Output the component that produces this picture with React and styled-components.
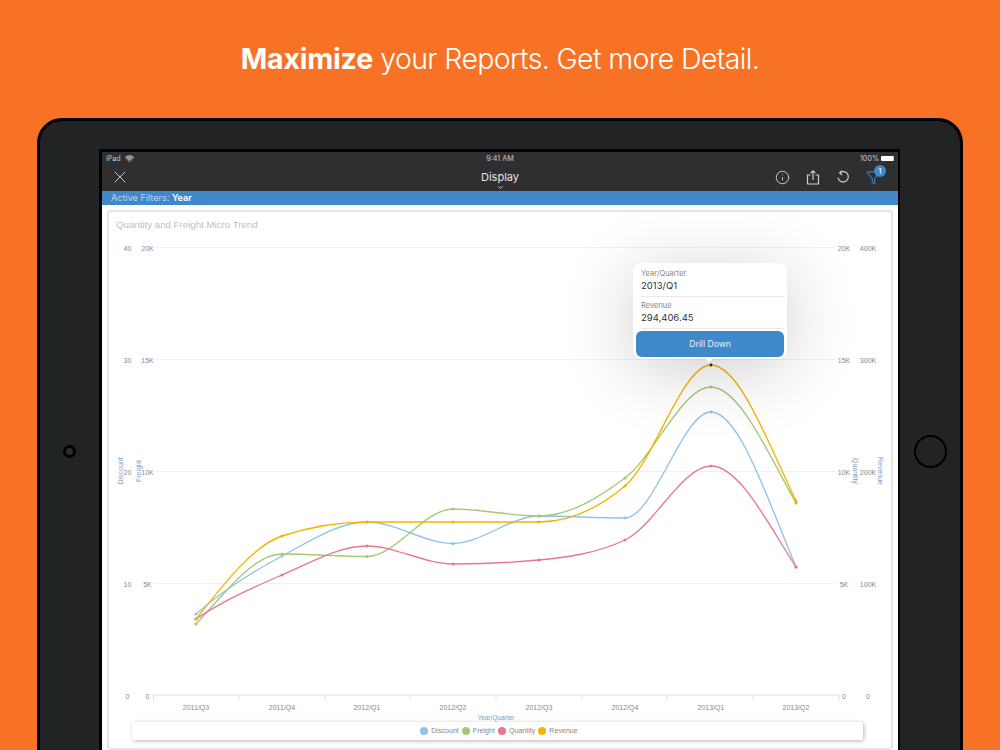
import React from 'react';
import styled, { createGlobalStyle } from 'styled-components';
import { X, Info, Filter, Wifi, ChevronDown } from 'lucide-react';

const GlobalStyle = createGlobalStyle`
  html, body {
    margin: 0;
    padding: 0;
    background: #f77225;
  }
`;

const Page = styled.div`
  width: 1000px;
  height: 750px;
  overflow: hidden;
  background: #f77225;
  font-family: "Liberation Sans", Arial, sans-serif;
`;

const Headline = styled.h1`
  margin: 0;
  height: 118px;
  display: flex;
  align-items: center;
  justify-content: center;
  padding-bottom: 1px;
  box-sizing: border-box;
  color: #fff;
  font-family: Inter, sans-serif;
  font-size: 28.5px;
  font-weight: 300;
  letter-spacing: -0.64px;

  strong {
    font-weight: 700;
    letter-spacing: -0.2px;
  }
`;

const Device = styled.div`
  display: flex;
  box-sizing: border-box;
  width: 926px;
  height: 666px;
  margin-left: 37px;
  border: 3px solid #000;
  border-radius: 25px;
  background: #222324;
`;

const Bezel = styled.div`
  flex: ${(p) => (p.$width ? `0 0 ${p.$width}px` : 1)};
  display: flex;
  align-items: center;
  justify-content: center;
`;

const Camera = styled.div`
  box-sizing: border-box;
  width: 13px;
  height: 13px;
  border: 3px solid #000;
  border-radius: 50%;
  background: #2d2d2f;
`;

const HomeButton = styled.div`
  box-sizing: border-box;
  width: 33px;
  height: 33px;
  border: 2px solid #000;
  border-radius: 50%;
`;

const Screen = styled.div`
  box-sizing: border-box;
  width: 801px;
  height: 604px;
  margin-top: 28px;
  border: 3px solid #000;
  border-right-width: 2px;
  border-bottom: 0;
  background: #fff;
`;

const StatusBar = styled.div`
  display: grid;
  grid-template-columns: 1fr auto 1fr;
  align-items: center;
  height: 13px;
  padding: 0 4px;
  background: #2f2f31;
  color: #c9c9ca;
  font-family: Inter, sans-serif;
  font-size: 7.2px;
`;

const StatusLeft = styled.div`
  display: flex;
  align-items: center;
  gap: 4px;
`;

const StatusRight = styled.div`
  display: flex;
  align-items: center;
  justify-content: flex-end;
  gap: 2px;
`;

const Battery = styled.div`
  width: 12px;
  height: 5px;
  border-right: 1px solid #c9c9ca;
  background: #fff;
  border-radius: 1px;
`;

const NavBar = styled.div`
  position: relative;
  display: flex;
  align-items: center;
  justify-content: space-between;
  box-sizing: border-box;
  height: 26px;
  padding: 0 17px 2px 8px;
  background: #2f2f31;
`;

const NavTitle = styled.div`
  position: absolute;
  left: 0;
  right: 0;
  top: 5px;
  display: flex;
  flex-direction: column;
  align-items: center;
  color: #e4e4e4;
  font-family: Inter, sans-serif;
  font-size: 11px;
  line-height: 14px;
  pointer-events: none;

  svg {
    margin-top: 0;
  }
`;

const NavIcons = styled.div`
  display: flex;
  align-items: center;
  gap: 16px;
`;

const FilterButton = styled.div`
  position: relative;
  display: flex;
`;

const Badge = styled.span`
  position: absolute;
  top: -5px;
  right: -5px;
  width: 12px;
  height: 12px;
  border-radius: 50%;
  background: #3f88c9;
  color: #fff;
  font-family: Inter, sans-serif;
  font-size: 8px;
  line-height: 12px;
  text-align: center;
`;

const FilterBar = styled.div`
  height: 14px;
  padding-left: 9px;
  background: #3f88c9;
  color: #b9d5ee;
  font-family: Inter, sans-serif;
  font-size: 9.1px;
  line-height: 14px;

  b {
    color: #fff;
    font-weight: 600;
  }
`;

const Card = styled.div`
  position: relative;
  box-sizing: border-box;
  width: 786px;
  height: 540px;
  margin: 5px 0 0 5px;
  border: 2px solid #e5e5e5;
  border-radius: 4px;
  background: #fff;
`;

const CardTitle = styled.div`
  height: 20px;
  padding-left: 7px;
  color: #c0c0c0;
  font-size: 9.7px;
  line-height: 25px;
`;

const ChartSvg = styled.svg`
  display: block;
  width: 782px;
  height: 490px;
`;

const AxisText = styled.text`
  fill: #888;
  font-family: "Liberation Sans", Arial, sans-serif;
  font-size: 7px;
  text-anchor: middle;
  dominant-baseline: central;
`;

const AxisTitle = styled.text`
  fill: #7e9ec8;
  font-family: "Liberation Sans", Arial, sans-serif;
  font-size: ${(p) => p.$size || 7}px;
  text-anchor: middle;
  dominant-baseline: central;
`;

const Legend = styled.div`
  display: flex;
  align-items: center;
  justify-content: center;
  gap: 3px;
  height: 18px;
  margin: 0 28px 0 23px;
  padding-left: 3px;
  border-radius: 2px;
  background: #fff;
  box-shadow: 1px 1px 4px rgba(0, 0, 0, 0.3);
  color: #888;
  font-size: 7.1px;
`;

const LegendItem = styled.span`
  display: flex;
  align-items: center;
  gap: 3px;

  &::before {
    content: '';
    width: 8px;
    height: 8px;
    border-radius: 50%;
    background: ${(p) => p.$color};
  }
`;

const Tooltip = styled.div`
  position: absolute;
  left: 524px;
  top: 51px;
  box-sizing: border-box;
  width: 154px;
  height: 96px;
  padding: 6px 3px 2px;
  border-radius: 9px;
  background: #fff;
  box-shadow: 0 10px 70px rgba(0, 0, 0, 0.2);

  &::after {
    content: '';
    position: absolute;
    left: 73px;
    bottom: -3px;
    border: 3px solid transparent;
    border-bottom: 0;
    border-top-color: #fff;
  }
`;

const TipRow = styled.div`
  box-sizing: border-box;
  height: 28px;
  margin: 0 0 4px 5px;
  border-bottom: 1px solid #e9e9e9;

  & + & {
    margin-bottom: 2px;
  }
`;

const TipLabel = styled.div`
  color: #888;
  font-family: Inter, sans-serif;
  font-size: 7.5px;
  line-height: 10px;
`;

const TipValue = styled.div`
  color: #333;
  font-family: Inter, sans-serif;
  font-size: 9.5px;
  line-height: 14px;
`;

const DrillButton = styled.div`
  height: 26px;
  border-radius: 6px;
  background: #3f88c9;
  color: #e8f1f9;
  font-family: Inter, sans-serif;
  font-size: 8.6px;
  line-height: 26px;
  text-align: center;
`;

const XS = [196, 282, 367, 453, 539, 625, 711, 796];
const QUARTERS = ['2011/Q3', '2011/Q4', '2012/Q1', '2012/Q2', '2012/Q3', '2012/Q4', '2013/Q1', '2013/Q2'];
const TICKS = [153.5, 239, 325, 410, 496, 582, 667, 753, 839];

const SERIES = [
  { name: 'Discount', color: '#8fc4e8', ys: [614, 556, 522, 543.5, 516, 518, 412, 567] },
  { name: 'Freight', color: '#a5c878', ys: [624, 554, 556.5, 509, 516, 478, 387, 503] },
  { name: 'Quantity', color: '#e8788f', ys: [619, 575, 546, 564, 560, 540, 466, 567] },
  { name: 'Revenue', color: '#f5b300', ys: [619, 536, 522, 522, 522, 486, 365, 501] },
];

const GRID = [
  { y: 248, a: '40', b: '20K', c: '20K', d: '400K' },
  { y: 360, a: '30', b: '15K', c: '15K', d: '300K' },
  { y: 472, a: '20', b: '10K', c: '10K', d: '200K' },
  { y: 584, a: '10', b: '5K', c: '5K', d: '100K' },
  { y: 696, a: '0', b: '0', c: '0', d: '0' },
];

// monotone cubic through the points, same shape as the charting lib draws
function splinePath(xs, ys) {
  const n = xs.length;
  const slopes = [];
  for (let i = 0; i < n - 1; i++) slopes.push((ys[i + 1] - ys[i]) / (xs[i + 1] - xs[i]));
  const t = xs.map((_, i) => {
    if (i === 0) return slopes[0] * 1.3;
    if (i === n - 1) return slopes[n - 2] * 1.3;
    if (slopes[i - 1] * slopes[i] <= 0) return 0;
    const h0 = xs[i] - xs[i - 1];
    const h1 = xs[i + 1] - xs[i];
    const p = (slopes[i - 1] * h1 + slopes[i] * h0) / (h0 + h1);
    return Math.sign(p) * Math.min(Math.abs(p), 2 * Math.abs(slopes[i - 1]), 2 * Math.abs(slopes[i]));
  });
  let d = `M${xs[0]} ${ys[0]}`;
  for (let i = 0; i < n - 1; i++) {
    const h = (xs[i + 1] - xs[i]) / 3;
    d += `C${xs[i] + h} ${ys[i] + t[i] * h} ${xs[i + 1] - h} ${ys[i + 1] - t[i + 1] * h} ${xs[i + 1]} ${ys[i + 1]}`;
  }
  return d;
}

function ShareIcon() {
  return (
    <svg width="14" height="15" viewBox="0 0 14 15" fill="none" stroke="#cfcfcf" strokeWidth="1.2">
      <path d="M4.5 5H1.5V14H12.5V5H9.5" />
      <path d="M7 10V1M4.6 3.2L7 .8L9.4 3.2" />
    </svg>
  );
}

function UndoIcon() {
  return (
    <svg width="14" height="14" viewBox="0 0 14 14" fill="none" stroke="#cfcfcf" strokeWidth="1.2">
      <path d="M4 2.6A5.2 5.2 0 1 1 2 7.5" />
      <path d="M6.2 .6L3.6 2.7L6 5" />
    </svg>
  );
}

function Chart() {
  return (
    <ChartSvg viewBox="109 232 782 490">
      {GRID.slice(0, 4).map((g) => (
        <line key={g.y} x1="154" x2="835" y1={g.y - 0.5} y2={g.y - 0.5} stroke="#f1f1f1" />
      ))}
      {GRID.map((g) => (
        <g key={g.a}>
          <AxisText x="127.5" y={g.y + 0.8}>{g.a}</AxisText>
          <AxisText x="147.5" y={g.y + 0.8}>{g.b}</AxisText>
          <AxisText x="844" y={g.y + 0.8}>{g.c}</AxisText>
          <AxisText x="868" y={g.y + 0.8}>{g.d}</AxisText>
        </g>
      ))}
      <line x1="153" x2="840" y1="695" y2="695" stroke="#dde5f0" strokeWidth="1.2" />
      {TICKS.map((x) => (
        <line key={x} x1={x} x2={x} y1="695" y2="701" stroke="#dde5f0" />
      ))}
      {QUARTERS.map((q, i) => (
        <AxisText key={q} x={XS[i]} y="707">{q}</AxisText>
      ))}
      <AxisTitle x="496" y="717.5" $size={6.5}>Year/Quarter</AxisTitle>
      <AxisTitle transform="translate(120 471) rotate(-90)">Discount</AxisTitle>
      <AxisTitle transform="translate(138 471) rotate(-90)">Freight</AxisTitle>
      <AxisTitle transform="translate(855 471) rotate(90)">Quantity</AxisTitle>
      <AxisTitle transform="translate(880 471) rotate(90)">Revenue</AxisTitle>
      {SERIES.map((s) => (
        <g key={s.name}>
          <path d={splinePath(XS, s.ys)} fill="none" stroke={s.color} strokeWidth="1.35" />
          {s.ys.map((y, i) => (
            <circle key={i} cx={XS[i]} cy={y} r="1.6" fill={s.color} />
          ))}
        </g>
      ))}
      <circle cx="711" cy="365" r="1.4" fill="#333" />
    </ChartSvg>
  );
}

export default function App() {
  return (
    <Page>
      <GlobalStyle />
      <Headline>
        <span><strong>Maximize</strong> your Reports. Get more Detail.</span>
      </Headline>
      <Device>
        <Bezel $width={59}>
          <Camera />
        </Bezel>
        <Screen>
          <StatusBar>
            <StatusLeft>
              iPad
              <Wifi size={9} strokeWidth={3} />
            </StatusLeft>
            <span>9:41 AM</span>
            <StatusRight>
              100%
              <Battery />
            </StatusRight>
          </StatusBar>
          <NavBar>
            <X size={20} color="#d8d8d8" strokeWidth={1.1} />
            <NavTitle>
              Display
              <ChevronDown size={7} strokeWidth={3} />
            </NavTitle>
            <NavIcons>
              <Info size={15} color="#cfcfcf" strokeWidth={1.5} />
              <ShareIcon />
              <UndoIcon />
              <FilterButton>
                <Filter size={15} color="#4a9ae0" strokeWidth={1.5} />
                <Badge>1</Badge>
              </FilterButton>
            </NavIcons>
          </NavBar>
          <FilterBar>
            Active Filters: <b>Year</b>
          </FilterBar>
          <Card>
            <CardTitle>Quantity and Freight Micro Trend</CardTitle>
            <Chart />
            <Legend>
              {SERIES.map((s) => (
                <LegendItem key={s.name} $color={s.color}>{s.name}</LegendItem>
              ))}
            </Legend>
            <Tooltip>
              <TipRow>
                <TipLabel>Year/Quarter</TipLabel>
                <TipValue>2013/Q1</TipValue>
              </TipRow>
              <TipRow>
                <TipLabel>Revenue</TipLabel>
                <TipValue>294,406.45</TipValue>
              </TipRow>
              <DrillButton>Drill Down</DrillButton>
            </Tooltip>
          </Card>
        </Screen>
        <Bezel>
          <HomeButton />
        </Bezel>
      </Device>
    </Page>
  );
}
